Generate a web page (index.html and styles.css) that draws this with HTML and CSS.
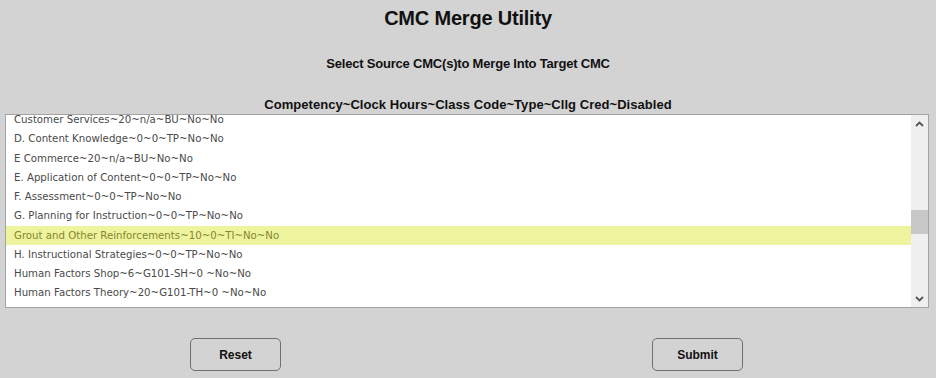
FILE: index.html
```html
<!DOCTYPE html>
<html>
<head>
<meta charset="utf-8">
<link rel="stylesheet" href="styles.css">
</head>
<body>
<h1 class="title">CMC Merge Utility</h1>
<p class="subtitle">Select Source CMC(s)to Merge Into Target CMC</p>
<p class="colhead">Competency~Clock Hours~Class Code~Type~Cllg Cred~Disabled</p>
<div class="listbox">
  <div class="viewport">
    <div class="rows">
      <div class="row">Customer Services~20~n/a~BU~No~No</div>
      <div class="row">D. Content Knowledge~0~0~TP~No~No</div>
      <div class="row">E Commerce~20~n/a~BU~No~No</div>
      <div class="row">E. Application of Content~0~0~TP~No~No</div>
      <div class="row">F. Assessment~0~0~TP~No~No</div>
      <div class="row">G. Planning for Instruction~0~0~TP~No~No</div>
      <div class="row selected">Grout and Other Reinforcements~10~0~TI~No~No</div>
      <div class="row">H. Instructional Strategies~0~0~TP~No~No</div>
      <div class="row">Human Factors Shop~6~G101-SH~0 ~No~No</div>
      <div class="row">Human Factors Theory~20~G101-TH~0 ~No~No</div>
      <div class="row">I. Professional Learning and Ethical Practices~0~0~TP~No~No</div>
    </div>
  </div>
  <div class="scrollbar">
    <div class="arrow">
      <svg width="9" height="6" viewBox="0 0 9 6"><path d="M1 5 L4.5 1.5 L8 5" fill="none" stroke="#555" stroke-width="1.8"/></svg>
    </div>
    <div class="track">
      <div class="thumb"></div>
    </div>
    <div class="arrow">
      <svg width="9" height="6" viewBox="0 0 9 6"><path d="M1 1 L4.5 4.5 L8 1" fill="none" stroke="#555" stroke-width="1.8"/></svg>
    </div>
  </div>
</div>
<div class="actions">
  <button class="btn">Reset</button>
  <button class="btn">Submit</button>
</div>
</body>
</html>
```
FILE: styles.css
```css
html, body {
  margin: 0;
  padding: 0;
  background: #d3d3d3;
}
body {
  width: 936px;
  height: 378px;
  overflow: hidden;
  font-family: "Liberation Sans", Arial, sans-serif;
  color: #111;
}
.title {
  margin: 0;
  padding-top: 6px;
  height: 24px;
  line-height: 24px;
  font-size: 20px;
  font-weight: bold;
  text-align: center;
  letter-spacing: -0.2px;
}
.subtitle {
  margin: 0;
  margin-top: 25px;
  line-height: 17px;
  font-size: 13px;
  font-weight: bold;
  text-align: center;
  letter-spacing: -0.2px;
}
.colhead {
  margin: 0;
  margin-top: 24px;
  line-height: 17px;
  font-size: 13px;
  font-weight: bold;
  text-align: center;
  letter-spacing: 0.05px;
}
.listbox {
  margin: 1px 0 0 5px;
  width: 922px;
  height: 192px;
  border: 1px solid #a3a3a3;
  background: #fff;
  display: flex;
}
.viewport {
  flex: 1;
  overflow: hidden;
}
.rows {
  margin-top: -5px;
}
.row {
  height: 19.25px;
  line-height: 19.25px;
  padding-left: 8px;
  font-family: "DejaVu Sans", sans-serif;
  font-size: 10.2px;
  color: #4a4a4a;
  white-space: nowrap;
}
.row.selected {
  background: #eef39d;
  color: #86862e;
}
.scrollbar {
  width: 17px;
  background: #efefef;
  display: flex;
  flex-direction: column;
}
.arrow {
  height: 17px;
  display: flex;
  align-items: center;
  justify-content: center;
}
.track {
  flex: 1;
  padding-top: 78px;
}
.thumb {
  height: 24px;
  background: #c8c8c8;
}
.actions {
  display: flex;
  gap: 371px;
  padding-left: 190px;
  margin-top: 30px;
}
.btn {
  width: 91px;
  height: 33px;
  border: 1px solid #707070;
  border-radius: 5px;
  background: #d3d3d3;
  font-family: "Liberation Sans", Arial, sans-serif;
  font-size: 12px;
  font-weight: bold;
  color: #111;
  padding: 0;
}
```
